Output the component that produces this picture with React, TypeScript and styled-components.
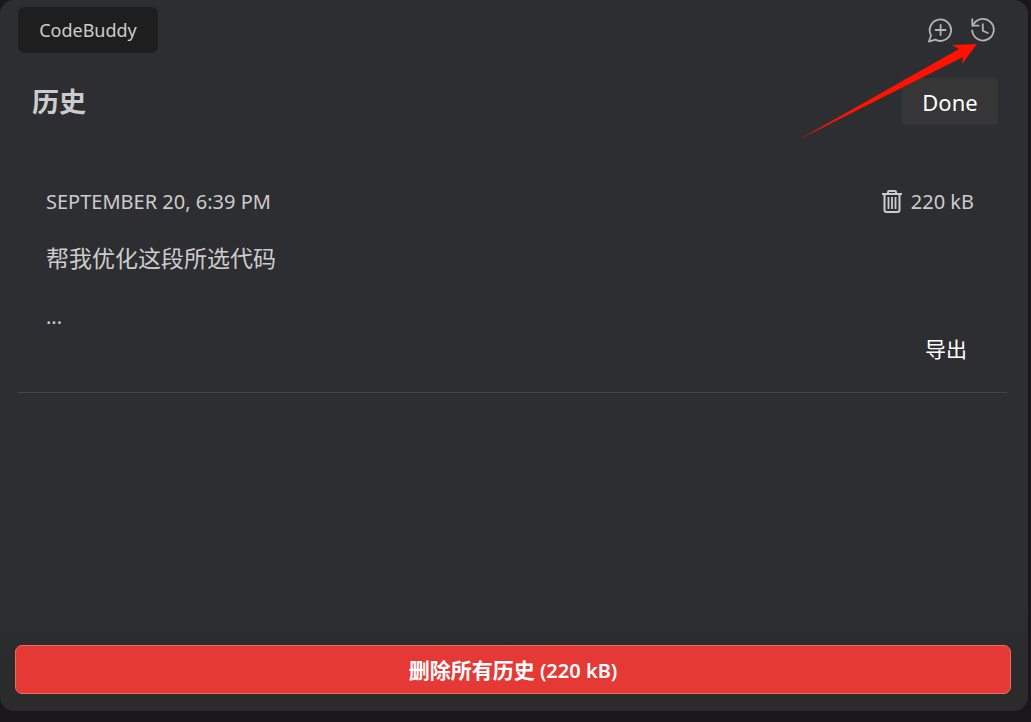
import React from "react";
import styled, { createGlobalStyle } from "styled-components";

const GlobalStyle = createGlobalStyle`
  *, *::before, *::after { box-sizing: border-box; }
  body {
    margin: 0;
    background: #19171c;
    color: #cccccc;
    font-family: "Noto Sans", "Noto Sans CJK SC", sans-serif;
    font-size: 20px;
    line-height: 28px;
  }
  button { font: inherit; color: inherit; border: 0; background: none; cursor: pointer; }
  h1, h2, p { margin: 0; }
`;

const Page = styled.div`
  display: flex;
  min-height: 100vh;
  padding: 0 3px 11px 0;
`;

const Panel = styled.main`
  position: relative;
  display: flex;
  flex: 1;
  flex-direction: column;
  min-width: 0;
  border-radius: 14px;
  background: linear-gradient(to top, #2b2b2c 0, #2b2b2c 50px, #2d2e31 110px);
`;

const TopBar = styled.header`
  display: flex;
  align-items: center;
  justify-content: space-between;
  padding: 7px 32px 0 18px;
`;

const Tab = styled.button`
  width: 140px;
  height: 46px;
  padding: 0;
  border-radius: 7px;
  background: #1e1e1e;
  font-size: 18px;
`;

const Actions = styled.div`
  display: flex;
  gap: 17px;
`;

const IconButton = styled.button`
  display: flex;
  padding: 0;
  color: #b4b4b5;
`;

const TitleRow = styled.div`
  display: flex;
  align-items: center;
  justify-content: space-between;
  padding: 25px 30px 0 32px;
`;

const Title = styled.h1`
  font-size: 27px;
  line-height: 40px;
  font-weight: 700;
`;

const DoneButton = styled.button`
  width: 96px;
  height: 47px;
  padding: 0;
  border-radius: 4px;
  background: #363637;
  color: #ffffff;
  font-size: 22px;
`;

const HistoryItem = styled.article`
  display: flex;
  flex-direction: column;
  margin: 34px 21px 0 18px;
  padding: 29px 33px 29px 28px;
  border-bottom: 1px solid #454648;
`;

const ItemHeader = styled.div`
  display: flex;
  align-items: center;
  justify-content: space-between;
`;

const RemoveButton = styled.button`
  display: flex;
  align-items: center;
  gap: 8px;
  padding: 0;
`;

const Prompt = styled.h2`
  margin-top: 26px;
  font-size: 23px;
  line-height: 32px;
  font-weight: 400;
`;

const Reply = styled.p`
  margin-top: 29px;
`;

const ExportButton = styled.button`
  align-self: flex-end;
  padding: 0;
  margin: 4px 7px 0 0;
  color: #ffffff;
  font-size: 21px;
`;

const Footer = styled.footer`
  display: flex;
  margin-top: auto;
  padding: 15px 17px 17px 15px;
`;

const ClearButton = styled.button`
  flex: 1;
  height: 49px;
  padding: 2px 0 0;
  border: 1px solid #ee6a66;
  border-radius: 7px;
  background: #e53935;
  color: #ffffff;
  font-size: 20px;
  font-weight: 600;
`;

const ClearLabel = styled.span`
  font-size: 21px;
  font-weight: 700;
`;

const Pointer = styled.svg`
  position: absolute;
  top: 42px;
  right: 50px;
  pointer-events: none;
`;

function NewChatIcon() {
  return (
    <svg width="26" height="26" viewBox="0 0 26 26" fill="none" stroke="currentColor" strokeWidth="1.8" strokeLinecap="round" strokeLinejoin="round" aria-hidden="true">
      <path d="M4 18.3A10.7 10.7 0 1 1 8.3 22.6L2 24.6Z" />
      <path d="M13.6 8v10M8.6 13h10" />
    </svg>
  );
}

function HistoryIcon() {
  return (
    <svg width="26" height="26" viewBox="0 0 26 26" fill="none" stroke="currentColor" strokeWidth="1.8" strokeLinecap="round" strokeLinejoin="round" aria-hidden="true">
      <path d="M2.3 2.2v6.5h6.4" />
      <path d="M3 8.5A10.8 10.8 0 1 1 2.2 13.5" />
      <path d="M12.8 7.2v6.6l5 2.2" />
    </svg>
  );
}

function TrashIcon() {
  return (
    <svg width="21" height="26" viewBox="0 0 21 26" fill="none" stroke="currentColor" strokeWidth="2" strokeLinejoin="round" aria-hidden="true">
      <path d="M0 5h20M6 5V3q0-1 1-1h6q1 0 1 1v2M2.500 5v16q0 2 2 2h11q2 0 2-2V5" />
      <path d="M6.500 8v12M10 8v12M13.500 8v12" strokeWidth="1.8" />
    </svg>
  );
}

export default function App() {
  return (
    <>
      <GlobalStyle />
      <Page>
        <Panel>
          <TopBar>
            <Tab type="button">CodeBuddy</Tab>
            <Actions>
              <IconButton type="button" aria-label="New chat">
                <NewChatIcon />
              </IconButton>
              <IconButton type="button" aria-label="History">
                <HistoryIcon />
              </IconButton>
            </Actions>
          </TopBar>
          <TitleRow>
            <Title>历史</Title>
            <DoneButton type="button">Done</DoneButton>
          </TitleRow>
          <HistoryItem>
            <ItemHeader>
              <time>SEPTEMBER 20, 6:39 PM</time>
              <RemoveButton type="button">
                <TrashIcon />
                220 kB
              </RemoveButton>
            </ItemHeader>
            <Prompt>帮我优化这段所选代码</Prompt>
            <Reply>...</Reply>
            <ExportButton type="button">导出</ExportButton>
          </HistoryItem>
          <Footer>
            <ClearButton type="button">
              <ClearLabel>删除所有历史</ClearLabel> (220 kB)
            </ClearButton>
          </Footer>
          <Pointer width="180" height="98" viewBox="0 0 180 98" aria-hidden="true">
            <path d="M0 98L161 7L154 3L179 2L164 22L165 15Z" fill="#ff1200" />
          </Pointer>
        </Panel>
      </Page>
    </>
  );
}
